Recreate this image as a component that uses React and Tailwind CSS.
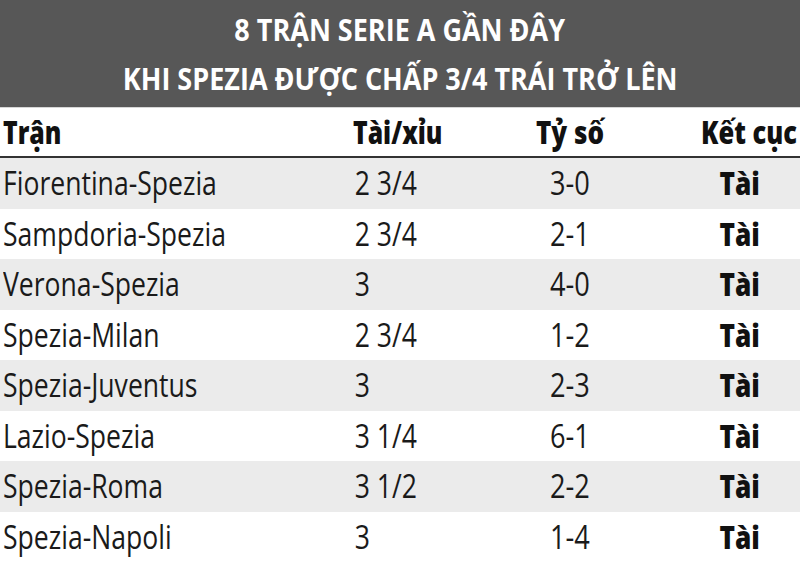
import React from "react";

const rows = [
  { match: "Fiorentina-Spezia", line: "2 3/4", score: "3-0" },
  { match: "Sampdoria-Spezia", line: "2 3/4", score: "2-1" },
  { match: "Verona-Spezia", line: "3", score: "4-0" },
  { match: "Spezia-Milan", line: "2 3/4", score: "1-2" },
  { match: "Spezia-Juventus", line: "3", score: "2-3" },
  { match: "Lazio-Spezia", line: "3 1/4", score: "6-1" },
  { match: "Spezia-Roma", line: "3 1/2", score: "2-2" },
  { match: "Spezia-Napoli", line: "3", score: "1-4" },
];

export default function App() {
  return (
    <div className="w-[800px] h-[578px] bg-white overflow-hidden font-['Open_Sans',sans-serif] whitespace-nowrap">
      <div className="h-[107px] bg-[#575757] flex flex-col items-center justify-center text-white font-bold text-[30px] leading-[49px]">
        <div className="scale-x-[0.9] origin-center">8 TRẬN SERIE A GẦN ĐÂY</div>
        <div className="scale-x-[0.9] origin-center">KHI SPEZIA ĐƯỢC CHẤP 3/4 TRÁI TRỞ LÊN</div>
      </div>

      <div className="grid grid-cols-[350px_147px_140px_1fr] h-[51px] items-center pl-[3px] pr-[3px] border-t border-t-[#d6d6d6] border-b-2 border-b-[#333] font-extrabold text-[31px] text-[#111]">
        <div className="scale-x-[0.8] origin-left">Trận</div>
        <div className="scale-x-[0.8] origin-left">Tài/xỉu</div>
        <div className="scale-x-[0.84] origin-center text-center">Tỷ số</div>
        <div className="scale-x-[0.82] origin-right text-right">Kết cục</div>
      </div>

      <div>
        {rows.map((r, i) => (
          <div
            key={r.match}
            className={
              "grid grid-cols-[350px_147px_140px_1fr] h-[50.5px] items-center pl-[3px] pr-[5px] text-[32px] font-medium text-[#1a1a1a] " +
              (i % 2 === 0 ? "bg-[#ebebeb]" : "bg-white")
            }
          >
            <div className="scale-x-[0.83] origin-left">{r.match}</div>
            <div className="scale-x-[0.83] origin-left pl-[2px]">{r.line}</div>
            <div className="scale-x-[0.85] origin-center text-center">{r.score}</div>
            <div className="text-center pl-[45px] font-extrabold text-[#111]">
              <span className="inline-block scale-x-[0.82] origin-center">Tài</span>
            </div>
          </div>
        ))}
      </div>
    </div>
  );
}
